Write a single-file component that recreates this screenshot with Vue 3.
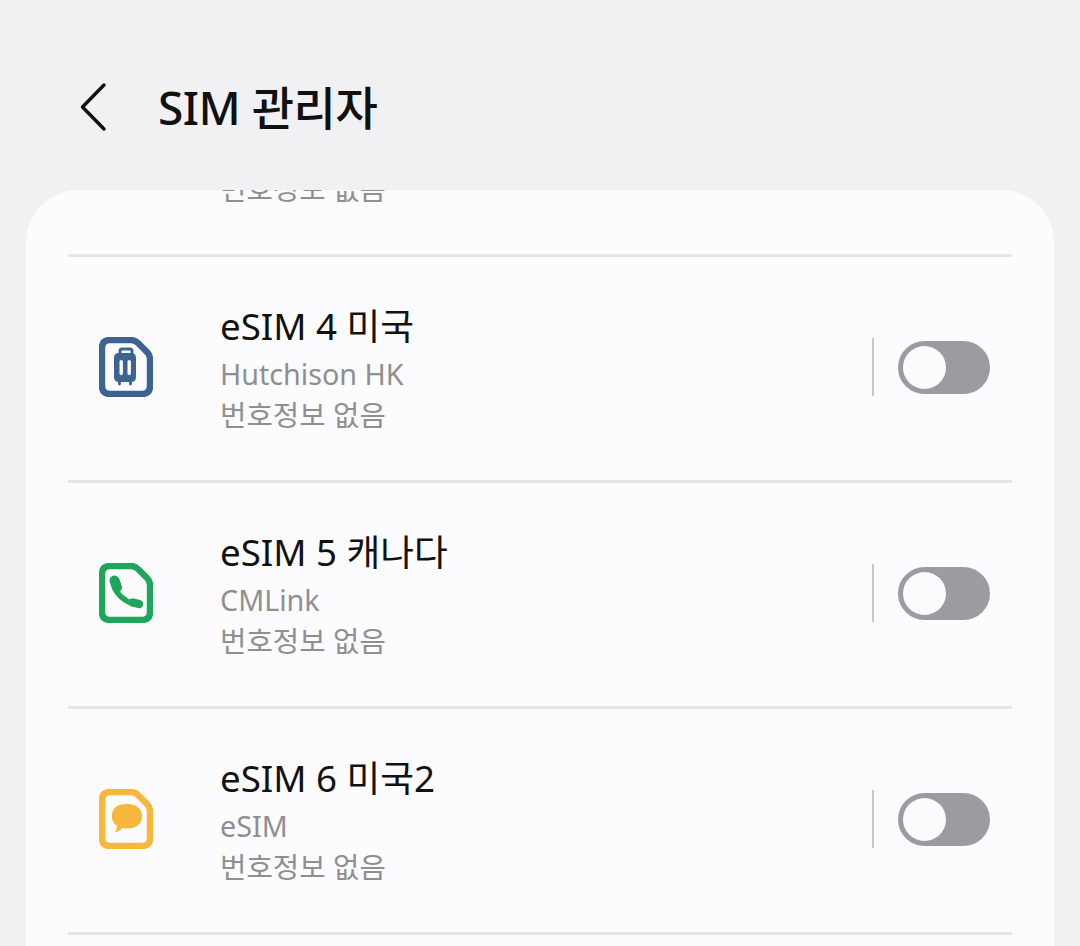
<template>
  <div class="screen">
    <header class="top-bar">
      <svg class="back" width="28" height="50" viewBox="0 0 28 50" fill="none">
        <path d="M25 3 L3.5 25 L25 47" stroke="#111" stroke-width="3.4" stroke-linecap="round" stroke-linejoin="round" />
      </svg>
      <h1 class="title">SIM 관리자</h1>
    </header>

    <main class="card">
      <div class="list">
        <div v-for="sim in sims" :key="sim.name" class="row">
          <svg class="sim-icon" width="54" height="60" viewBox="0 0 54 60" fill="none">
            <path
              d="M11 3 H32 Q36 3 39 6 L48 15 Q51 18 51 22 V49 Q51 57 43 57 H11 Q3 57 3 49 V11 Q3 3 11 3 Z"
              :stroke="sim.color"
              stroke-width="6.4"
            />
            <!-- travel: suitcase -->
            <g v-if="sim.kind === 'travel'">
              <path d="M21 17 V14 Q21 12 23 12 H31 Q33 12 33 14 V17" :stroke="sim.color" stroke-width="3" />
              <path
                fill-rule="evenodd"
                :fill="sim.color"
                d="M20 16 H32 Q37 16 37 21 V40 Q37 45 32 45 H20 Q15 45 15 40 V21 Q15 16 20 16 Z M20.500 24.500 V36.500 Q20.500 38 22.200 38 Q23.900 38 23.900 36.500 V24.500 Q23.900 23 22.200 23 Q20.500 23 20.500 24.500 Z M28.500 24.500 V36.500 Q28.500 38 30.200 38 Q31.900 38 31.900 36.500 V24.500 Q31.900 23 30.200 23 Q28.500 23 28.500 24.500 Z"
              />
              <path d="M20.500 45 V47 M31.500 45 V47" :stroke="sim.color" stroke-width="2.8" stroke-linecap="round" />
            </g>
            <!-- call: handset -->
            <g v-else-if="sim.kind === 'call'" :stroke="sim.color" stroke-linecap="round">
              <path d="M15 22 C17 31 25 38 35 41" stroke-width="5.500" />
              <path d="M15.500 17.500 L18 24.500" stroke-width="10" />
              <path d="M34 39.500 L40 41" stroke-width="8.500" />
            </g>
            <!-- message: bubble -->
            <path
              v-else
              :fill="sim.color"
              d="M27.500 15 C37.500 15 43 19.500 43 27 C43 35 37.500 39.500 27.500 39.500 C26 39.500 24.500 39.300 23 39 C21.500 41 19 42.800 16 43.300 C17.500 41 17.800 38.800 17.800 36.800 C14.500 34.500 12.800 31 12.800 27 C12.800 19.500 18 15 27.500 15 Z"
            />
          </svg>

          <div class="info">
            <div class="name">{{ sim.name }}</div>
            <div class="sub">{{ sim.carrier }}</div>
            <div class="sub">번호정보 없음</div>
          </div>

          <span class="sep"></span>
          <span class="toggle"><span class="thumb"></span></span>
        </div>
      </div>
    </main>
  </div>
</template>

<script setup>
const sims = [
  { name: 'eSIM 3', carrier: 'eSIM', kind: 'call', color: '#1fa65a' },
  { name: 'eSIM 4 미국', carrier: 'Hutchison HK', kind: 'travel', color: '#3d6391' },
  { name: 'eSIM 5 캐나다', carrier: 'CMLink', kind: 'call', color: '#1fa65a' },
  { name: 'eSIM 6 미국2', carrier: 'eSIM', kind: 'message', color: '#f6b73c' },
  { name: 'eSIM 7', carrier: 'eSIM', kind: 'call', color: '#1fa65a' },
]
</script>

<style>
html, body {
  background: #f1f1f3;
}
</style>

<style scoped>
.screen {
  height: 946px;
  display: flex;
  flex-direction: column;
  overflow: hidden;
  background: #f1f1f3;
  font-family: "Noto Sans", "Noto Sans CJK KR", sans-serif;
}

.top-bar {
  height: 190px;
  flex: none;
  display: flex;
  align-items: center;
  padding: 24px 0 0 79px;
  box-sizing: border-box;
}
.back {
  flex: none;
}
.title {
  margin: 0 0 0 51px;
  font-size: 46px;
  line-height: 60px;
  font-weight: 500;
  color: #111;
  letter-spacing: -0.5px;
}

.card {
  flex: 1;
  margin: 0 26px;
  background: #fcfcfe;
  border-radius: 52px 52px 0 0;
  overflow: hidden;
}
/* list is scrolled, first row is mostly cut off */
.list {
  margin: -159px 42px 0;
}
.row {
  height: 226px;
  box-sizing: border-box;
  display: flex;
  align-items: center;
  padding: 0 22px 4px 31px;
  border-bottom: 3px solid #e6e6e8;
}
.sim-icon {
  flex: none;
  margin-right: 67px;
}
.info {
  flex: 1;
  min-width: 0;
  padding-top: 2px;
}
.name {
  font-size: 36.7px;
  line-height: 53px;
  color: #111;
}
.sub {
  font-size: 28.7px;
  line-height: 41px;
  color: #8f8f92;
}
.sep {
  width: 2px;
  height: 58px;
  background: #c8c8ca;
  margin-right: 24px;
}
.toggle {
  width: 92px;
  height: 53px;
  margin-top: 2px;
  border-radius: 27px;
  background: #9c9ca0;
  display: flex;
  align-items: center;
  padding-left: 5px;
  box-sizing: border-box;
}
.thumb {
  width: 43px;
  height: 43px;
  border-radius: 50%;
  background: #fcfcfe;
}
</style>
